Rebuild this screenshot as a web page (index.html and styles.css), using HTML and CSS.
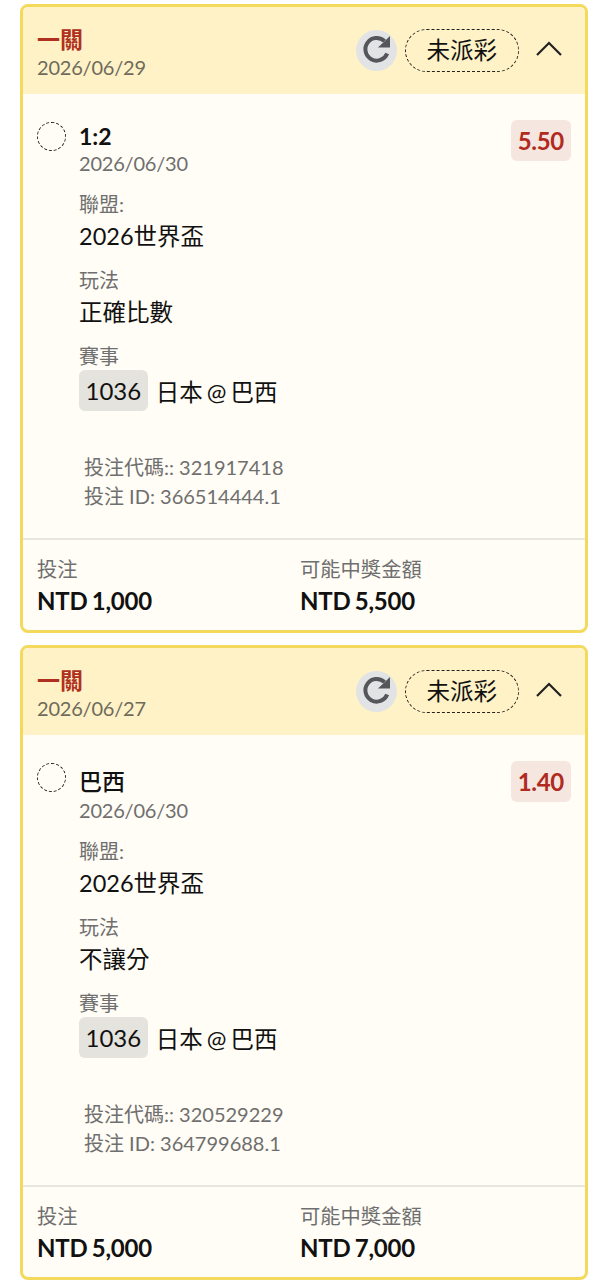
FILE: index.html
```html
<!DOCTYPE html>
<html lang="zh-TW">
<head>
    <meta charset="UTF-8">
    <meta name="viewport" content="width=device-width, initial-scale=1.0">
    <title>投注紀錄</title>
    <link rel="stylesheet" href="styles.css">
</head>
<body>
    <div class="card">
        <div class="card-head">
            <div>
                <div class="head-title">一關</div>
                <div class="head-date">2026/06/29</div>
            </div>
            <div class="head-actions">
                <span class="refresh">
                    <svg width="41" height="41" viewBox="0 0 41 41"><path d="M28.5 11.1A11.3 11.3 0 1 0 31.2 23.5" fill="none" stroke="#55565a" stroke-width="4"/><path d="M34 6V17.5H22Z" fill="#55565a"/></svg>
                </span>
                <span class="status">未派彩</span>
                <svg class="chevron" width="30" height="18" viewBox="0 0 30 18"><path d="M3 15L15 3L27 15" fill="none" stroke="#222" stroke-width="2.2"/></svg>
            </div>
        </div>
        <div class="card-body">
            <div class="circle"></div>
            <div class="info">
                <div class="pick">1:2</div>
                <div class="pick-date">2026/06/30</div>
                <div class="label first">聯盟:</div>
                <div class="value">2026世界盃</div>
                <div class="label">玩法</div>
                <div class="value">正確比數</div>
                <div class="label">賽事</div>
                <div class="match"><span class="match-no">1036</span> 日本 @ 巴西</div>
            </div>
            <div class="odds">5.50</div>
        </div>
        <div class="codes">
            <div>投注代碼:: 321917418</div>
            <div>投注 ID: 366514444.1</div>
        </div>
        <div class="card-foot">
            <div class="foot-col">
                <div class="foot-label">投注</div>
                <div class="foot-value">NTD 1,000</div>
            </div>
            <div class="foot-col">
                <div class="foot-label">可能中獎金額</div>
                <div class="foot-value">NTD 5,500</div>
            </div>
        </div>
    </div>

    <div class="card">
        <div class="card-head">
            <div>
                <div class="head-title">一關</div>
                <div class="head-date">2026/06/27</div>
            </div>
            <div class="head-actions">
                <span class="refresh">
                    <svg width="41" height="41" viewBox="0 0 41 41"><path d="M28.5 11.1A11.3 11.3 0 1 0 31.2 23.5" fill="none" stroke="#55565a" stroke-width="4"/><path d="M34 6V17.5H22Z" fill="#55565a"/></svg>
                </span>
                <span class="status">未派彩</span>
                <svg class="chevron" width="30" height="18" viewBox="0 0 30 18"><path d="M3 15L15 3L27 15" fill="none" stroke="#222" stroke-width="2.2"/></svg>
            </div>
        </div>
        <div class="card-body">
            <div class="circle"></div>
            <div class="info">
                <div class="pick pick-cjk">巴西</div>
                <div class="pick-date">2026/06/30</div>
                <div class="label first">聯盟:</div>
                <div class="value">2026世界盃</div>
                <div class="label">玩法</div>
                <div class="value">不讓分</div>
                <div class="label">賽事</div>
                <div class="match"><span class="match-no">1036</span> 日本 @ 巴西</div>
            </div>
            <div class="odds">1.40</div>
        </div>
        <div class="codes">
            <div>投注代碼:: 320529229</div>
            <div>投注 ID: 364799688.1</div>
        </div>
        <div class="card-foot">
            <div class="foot-col">
                <div class="foot-label">投注</div>
                <div class="foot-value">NTD 5,000</div>
            </div>
            <div class="foot-col">
                <div class="foot-label">可能中獎金額</div>
                <div class="foot-value">NTD 7,000</div>
            </div>
        </div>
    </div>
</body>
</html>
```
FILE: styles.css
```css
body {
    font-family: Lato, "Noto Sans CJK TC", sans-serif;
    background-color: #fff;
    color: #111;
    margin: 0;
    padding: 4px 14px 0 20px;
}
.card {
    border: 3px solid #f3d95c;
    border-radius: 8px;
    background: #fffdf5;
    margin-bottom: 12px;
    overflow: hidden;
}
.card-head {
    display: flex;
    justify-content: space-between;
    align-items: flex-start;
    height: 87px;
    box-sizing: border-box;
    padding: 18px 14px 0;
    background: #fef2c6;
}
.head-title {
    font-size: 23px;
    line-height: 28px;
    font-weight: 700;
    color: #b03020;
}
.head-date {
    font-size: 20px;
    line-height: 28px;
    letter-spacing: -0.2px;
    color: #6f6a5c;
}
.head-actions {
    display: flex;
    align-items: center;
    gap: 8px;
    margin-top: 4px;
}
.refresh {
    display: flex;
    width: 41px;
    height: 41px;
    border-radius: 50%;
    background: #e2e3e5;
}
.status {
    border: 1px dashed #222;
    border-radius: 22px;
    padding: 0 21px;
    font-size: 23.5px;
    line-height: 41px;
    height: 41px;
}
.chevron {
    margin-left: 7px;
    margin-right: 7px;
    margin-bottom: 4px;
}
.card-body {
    display: flex;
    align-items: flex-start;
    padding: 28px 14px 0;
}
.circle {
    width: 29px;
    height: 29px;
    box-sizing: border-box;
    border: 1px dashed #222;
    border-radius: 50%;
    margin-right: 13px;
}
.info {
    flex: 1;
}
.pick {
    font-size: 23px;
    font-weight: 700;
}
.pick-cjk {
    font-weight: 500;
}
.pick-date {
    font-size: 20px;
    line-height: 26px;
    letter-spacing: -0.2px;
    color: #6f6f6f;
}
.label {
    font-size: 20px;
    line-height: 26px;
    color: #6f6f6f;
    margin-top: 14px;
}
.label.first {
    margin-top: 15px;
}
.value {
    font-size: 23.5px;
    line-height: 34px;
    margin-top: 2px;
}
.match {
    display: flex;
    align-items: center;
    gap: 8px;
    font-size: 23.5px;
    word-spacing: -2px;
    margin-top: 1px;
}
.match-no {
    background: #e5e3dd;
    border-radius: 6px;
    padding: 0 6.5px;
    font-size: 24px;
    line-height: 41px;
}
.odds {
    background: #f5e6e0;
    color: #b02a20;
    border-radius: 6px;
    font-size: 24px;
    font-weight: 700;
    letter-spacing: -0.3px;
    line-height: 41px;
    padding: 0 7px;
    margin-top: -2px;
}
.codes {
    padding: 42px 14px 27px 61px;
    font-size: 20px;
    line-height: 29px;
    color: #6f6f6f;
}
.card-foot {
    display: flex;
    border-top: 2px solid #e8e6e0;
    padding: 14px 14px 13px;
}
.foot-col {
    width: 263px;
}
.foot-label {
    font-size: 20.3px;
    line-height: 30px;
    color: #6f6f6f;
}
.foot-value {
    font-size: 24px;
    line-height: 33px;
    font-weight: 700;
    letter-spacing: -0.2px;
    word-spacing: -1.5px;
}
```
